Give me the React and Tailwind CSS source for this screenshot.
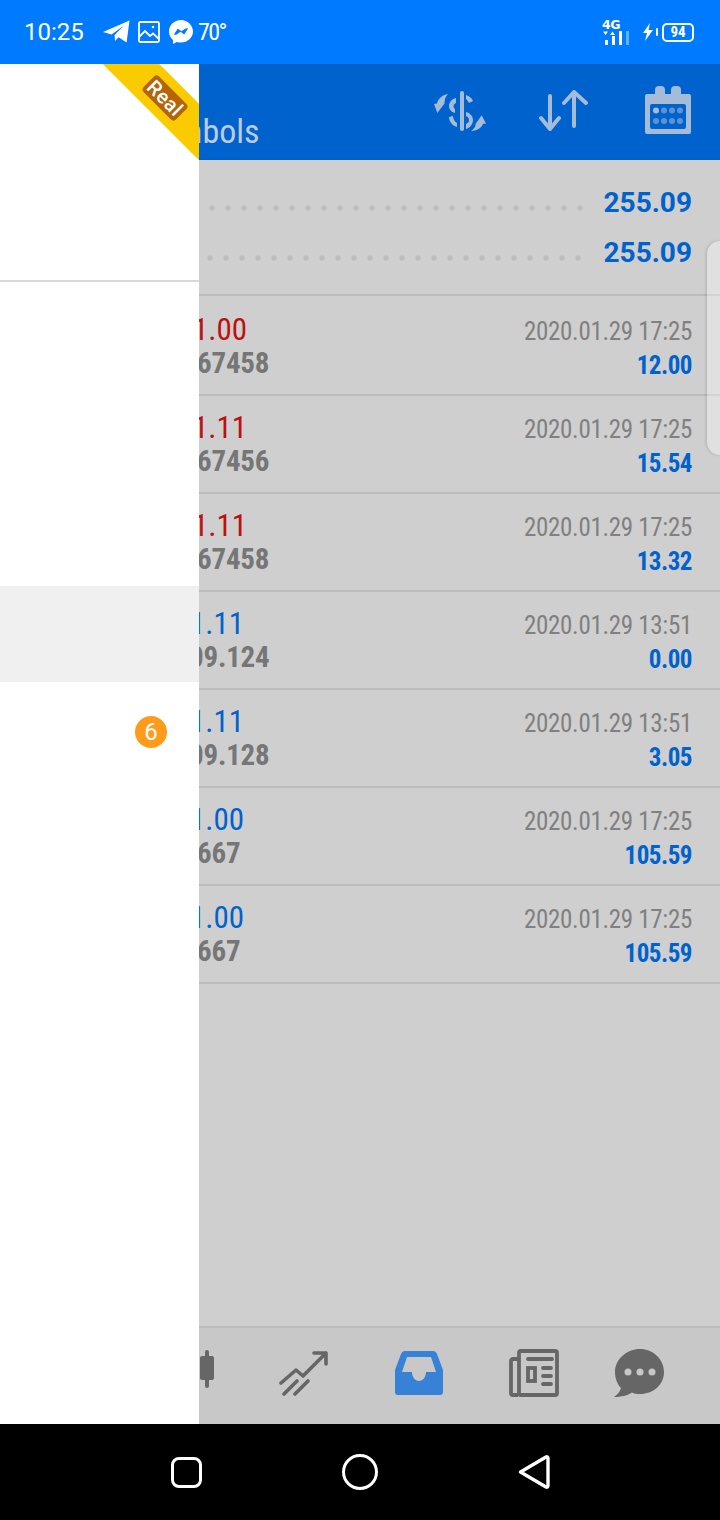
const ROW_FONT = "font-['Roboto','Liberation_Sans',sans-serif] [font-stretch:75%]";

const rows = [
  { a: "1.00", b: "67458", t: "2020.01.29 17:25", v: "12.00", red: true, h: "h-[100px]", pa: "pl-[193px]", pb: "pl-[197px]", top: "pt-[16px]" },
  { a: "1.11", b: "67456", t: "2020.01.29 17:25", v: "15.54", red: true, h: "h-[98px]", pa: "pl-[193px]", pb: "pl-[197px]", top: "pt-[14px]" },
  { a: "1.11", b: "67458", t: "2020.01.29 17:25", v: "13.32", red: true, h: "h-[98px]", pa: "pl-[193px]", pb: "pl-[197px]", top: "pt-[14px]" },
  { a: "1.11", b: "09.124", t: "2020.01.29 13:51", v: "0.00", red: false, h: "h-[98px]", pa: "pl-[190px]", pb: "pl-[189px]", top: "pt-[14px]" },
  { a: "1.11", b: "09.128", t: "2020.01.29 13:51", v: "3.05", red: false, h: "h-[98px]", pa: "pl-[190px]", pb: "pl-[189px]", top: "pt-[14px]" },
  { a: "1.00", b: "667", t: "2020.01.29 17:25", v: "105.59", red: false, h: "h-[98px]", pa: "pl-[190px]", pb: "pl-[197px]", top: "pt-[14px]" },
  { a: "1.00", b: "667", t: "2020.01.29 17:25", v: "105.59", red: false, h: "h-[98px]", pa: "pl-[190px]", pb: "pl-[197px]", top: "pt-[14px]" },
];

function StatusBar() {
  return (
    <div className="h-16 shrink-0 bg-[#007aff] flex items-center pl-[24px] pr-[26px] text-white font-['Roboto',sans-serif]">
      <span className="text-[24px] leading-none w-[62px]">10:25</span>
      <svg className="ml-[17px]" width="27" height="24" viewBox="0 0 27 24" fill="#fff"><path d="M0 12 26.500 .5 23.600 22.500 15.600 17.200 12 21 11.600 15 21 5.500 8.600 14.600Z" /></svg>
      <svg className="ml-[8px]" width="22" height="22" viewBox="0 0 22 22" fill="none" stroke="#fff" strokeWidth="1.800"><rect x="1" y="1" width="20" height="20" rx="1.500" /><path d="M1 16 7 10l5 5 3-2.500 6 5.500" /><circle cx="15" cy="6" r="1.300" fill="#fff" stroke="none" /></svg>
      <svg className="ml-[9px]" width="24" height="24" viewBox="0 0 24 24"><path fill="#fff" d="M12 0C5.300 0 0 5 0 11.500c0 3.500 1.500 6.400 4 8.500v4l3.800-2.100c1.300.4 2.700.6 4.200.6 6.700 0 12-5 12-11S18.700 0 12 0Z" /><path fill="#007aff" d="m4.800 14.800 4-6.200 3.500 2.700 4.300-2.800 2.600-.2-4 6.100-3.700-2.700-4.200 3Z" /></svg>
      <span className="ml-[5px] text-[24px] leading-none [font-stretch:75%] tracking-[-1.600px]">70°</span>
      <div className="flex-1" />
      <div className="relative w-[28px] h-[25px] mr-[13px] mt-[3px]">
        <span className="absolute left-0 top-[-3px] text-[12.500px] font-bold leading-[14px] font-['DejaVu_Sans',sans-serif] tracking-[-0.500px]">4G</span>
        <svg width="28" height="25" viewBox="0 0 28 25" fill="#fff">
          <path d="M1 10.500h5l-2.500 3.500ZM10.500 10.500l2.500 3.500H8Z" />
          <rect x="3" y="19" width="3" height="5" /><rect x="10" y="15" width="3" height="9" /><rect x="17" y="10" width="3" height="14" /><rect x="24" y="10" width="3" height="14" fill="#66aeff" />
        </svg>
      </div>
      <svg width="10" height="18" viewBox="0 0 10 18" fill="#fff" className="mr-[3px]"><path d="M7 0 0 10h4l-2 8 8-11H5.500Z" /></svg>
      <span className="w-[2px] h-[8px] bg-white mr-[4px] rounded-sm" />
      <span className="w-[32px] h-[19px] border-2 border-white rounded-[5px] flex items-center justify-center text-[15px] font-bold leading-none [font-stretch:75%]">94</span>
    </div>
  );
}

function Header() {
  return (
    <div className="h-24 shrink-0 bg-[#0062cc] border-b-2 border-[#005ec4] relative flex items-end pl-[145px] pr-[29px]">
      <span className={`${ROW_FONT} text-[34px] leading-none text-[#bccbe0] mb-[10px]`}>Symbols</span>
      <div className="flex-1" />
      <div className="flex items-center mb-[24px]">
        <svg className="mt-[1px]" width="52" height="40" viewBox="0 0 52 40" fill="#a5bcd8">
          <rect x="26" y="0" width="4" height="40" rx="2" />
          <path d="M14 3C11 6 10.500 9 10.500 12.500L3.300 22 0 13 3 12.500C4 8 8 4 14 3Z" />
          <path d="M37 40C41 37 41.500 35 41.700 32.700L47.700 24.300 52 32.700 49 32.700C48 36 44 39.500 37 40Z" />
          <path d="M22 7C17 8 15 12 15 15c0 3 2 6 6 7l0-4c-2-1-2-5 1-6ZM32 4c3 1 6 3 7 6l-4 2c-1-2-2-3-3-4ZM15 26l4-1c0 3 2 6 4 7v4c-4-1-8-5-8-10ZM32 21c4 1 7 4 7 8 0 4-3 8-7 9v-5c2-1 3-2 3-4s-1-3-3-4Z" />
        </svg>
        <svg className="ml-[52px] mt-[2px]" width="50" height="42" viewBox="0 0 50 42" fill="none" stroke="#a5bcd8" strokeWidth="4" strokeLinecap="round" strokeLinejoin="round">
          <path d="M12 6v33M3 28l9 11 9-11M36 2v34M26 13 36 2l12 11" />
        </svg>
        <svg className="ml-[57px]" width="46" height="48" viewBox="0 0 46 48">
          <path fill="#a5bcd8" d="M2 8h8V4a4 4 0 0 1 4-4h2a4 4 0 0 1 4 4v4h6V4a4 4 0 0 1 4-4h2a4 4 0 0 1 4 4v4h8a2 2 0 0 1 2 2v36a2 2 0 0 1-2 2H2a2 2 0 0 1-2-2V10a2 2 0 0 1 2-2Z" />
          <rect x="5" y="18" width="36" height="25" rx="2" fill="#0062cc" />
          {[11, 19, 27, 35].flatMap((x) => [24.500, 35].map((y) => <circle key={`${x}-${y}`} cx={x} cy={y} r="3" fill={x === 11 && y === 24.500 ? "#a5bcd8" : "#5f92cf"} />))}
        </svg>
      </div>
    </div>
  );
}

function Dots({ from }) {
  return <div className={`w-[384px] h-[6px] mt-[11px] ${from} bg-[radial-gradient(circle_at_center,#bdbdbd_2.200px,transparent_3px)] bg-[length:16px_6px]`} />;
}

function Summary() {
  return (
    <div className={`h-[136px] shrink-0 border-b-2 border-[#bcbcbc] pt-[22px] pr-[28px] ${ROW_FONT}`}>
      <div className="h-[40px] flex items-center justify-between">
        <Dots from="ml-[204px]" />
        <span className="text-[28px] font-bold leading-none mt-[2px] text-[#0062cc] [font-stretch:100%]">255.09</span>
      </div>
      <div className="h-[10px]" />
      <div className="h-[40px] flex items-center justify-between">
        <Dots from="ml-[202px]" />
        <span className="text-[28px] font-bold leading-none mt-[2px] text-[#0062cc] [font-stretch:100%]">255.09</span>
      </div>
    </div>
  );
}

function Row({ r }) {
  return (
    <div className={`${r.h} shrink-0 box-border border-b-2 border-[#bcbcbc] flex justify-between pr-[28px] ${r.top} ${ROW_FONT}`}>
      <div className="flex flex-col">
        <span className={`${r.pa} text-[31px] leading-[36px] ${r.red ? "text-[#bd1010]" : "text-[#0062cc]"}`}>{r.a}</span>
        <span className={`${r.pb} -mt-[2px] text-[29px] font-bold leading-[34px] tracking-[-0.200px] text-[#767676]`}>{r.b}</span>
      </div>
      <div className="flex flex-col items-end">
        <span className="text-[25px] leading-[34px] mt-[3px] tracking-[-0.300px] text-[#808080]">{r.t}</span>
        <span className="text-[25px] font-bold leading-[34px] tracking-[-0.500px] text-[#0062cc]">{r.v}</span>
      </div>
    </div>
  );
}

function BottomNav() {
  return (
    <div className="h-[98px] shrink-0 bg-[#c8c8c8] border-t-2 border-[#bcbcbc] relative flex items-start pl-[195px] pt-[21px]">
      <svg className="mt-[1px]" width="22" height="38" viewBox="0 0 22 38" fill="#666">
        <rect x="5" y="6" width="14" height="24" rx="2" /><rect x="10" y="0" width="4" height="38" rx="2" />
      </svg>
      <svg className="ml-[62px] mt-[1px]" width="50" height="46" viewBox="0 0 50 46" fill="none" stroke="#666" strokeWidth="3.600" strokeLinecap="round" strokeLinejoin="round">
        <path d="M2 33 17 20l7 6L47 3M35 3h12v11M5 44l13-13M16 44l13-13" />
      </svg>
      <svg className="ml-[65px] mt-[1px]" width="50" height="46" viewBox="0 0 50 46">
        <path fill="#3782d7" fillRule="evenodd" d="M11 1h28c2 0 3 1 4 3l6 16v22c0 2-1 3-3 3H4c-2 0-3-1-3-3V20L7 4c1-2 2-3 4-3Zm2 6L8 22h10c0 5 3 9 7 9s7-4 7-9h10L37 7H13Z" />
      </svg>
      <svg className="ml-[65px]" width="50" height="48" viewBox="0 0 50 48" fill="none" stroke="#666">
        <path strokeWidth="3.800" d="M9 10H4a2 2 0 0 0-2 2v32a2 2 0 0 0 2 2h5M13 2h33a2 2 0 0 1 2 2v40a2 2 0 0 1-2 2H12a2 2 0 0 1-2-2V4a2 2 0 0 1 3-2Z" />
        <path strokeWidth="3.800" strokeLinecap="round" d="M19 10h24M34 19h8M34 27h8M34 35h8" />
        <rect x="19" y="19" width="7" height="13" strokeWidth="3.800" />
      </svg>
      <svg className="ml-[55px]" width="50" height="48" viewBox="0 0 50 48">
        <path fill="#666" d="M26 0c13 0 24 10 24 23S39 45 26 45c-3 0-6-.5-8-1.500C14 46.500 7 48 0 48c3-2 6-5 7-9-4-4-6-10-6-16C1 10 13 0 26 0Z" />
        <circle cx="14" cy="23" r="3.500" fill="#c8c8c8" /><circle cx="26" cy="23" r="3.500" fill="#c8c8c8" /><circle cx="38" cy="23" r="3.500" fill="#c8c8c8" />
      </svg>
    </div>
  );
}

function NavBar() {
  return (
    <div className="h-24 shrink-0 bg-black flex items-center pl-[171px]">
      <span className="w-[31px] h-[31px] border-[3px] border-white rounded-[8px] block" />
      <span className="ml-[140px] w-[36px] h-[36px] border-[3px] border-white rounded-full block" />
      <svg className="ml-[140px]" width="32" height="36" viewBox="0 0 32 36" fill="none" stroke="#fff" strokeWidth="3.400" strokeLinejoin="round"><path d="M2.500 18 28 3c1-.5 2 0 2 1.500v27c0 1.500-1 2-2 1.500Z" /></svg>
    </div>
  );
}

function Drawer() {
  return (
    <div className="absolute left-0 top-16 w-[199px] h-[1360px] bg-white overflow-hidden">
      <div className="h-[218px] border-b-2 border-[#d9d9d9]" />
      <div className="h-[304px]" />
      <div className="h-[96px] bg-[#f0f0f0]" />
      <div className="h-[100px] flex items-center justify-end pr-[32px]">
        <span className="w-8 h-8 rounded-full bg-[#ff9b1a] text-white text-[24px] leading-none flex items-center justify-center font-['Roboto',sans-serif]">6</span>
      </div>
      <div className="absolute left-[85px] top-[14px] w-[160px] h-[40px] rotate-45 bg-[#facc00] flex items-center justify-center">
        <span className="bg-[#b5640a] text-white text-[20px] font-medium leading-none rounded-[4px] px-[2px] py-[1px] tracking-[0.500px] font-['Roboto',sans-serif]">Real</span>
      </div>
    </div>
  );
}

export default function App() {
  return (
    <div className="relative w-[720px] h-[1520px] overflow-hidden flex flex-col bg-[#cfcfcf]">
      <StatusBar />
      <Header />
      <Summary />
      {rows.map((r, i) => <Row key={i} r={r} />)}
      <div className="flex-1" />
      <BottomNav />
      <NavBar />
      <div className="absolute right-0 top-[241px] w-[13px] h-[214px] bg-white/35 rounded-l-[24px] shadow-[-1px_0_3px_rgba(0,0,0,0.15)]" />
      <Drawer />
    </div>
  );
}
